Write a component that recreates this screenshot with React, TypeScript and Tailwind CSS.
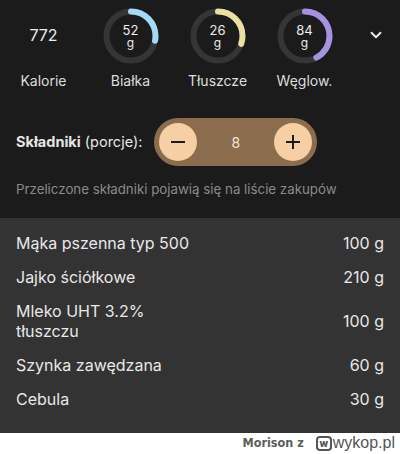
import React from 'react';
import { ChevronDown } from 'lucide-react';

interface RingProps {
  value: number;
  label: string;
  color: string;
  fraction: number;
}

const R = 24.5;
const C = 2 * Math.PI * R;

const Ring = ({ value, label, color, fraction }: RingProps) => (
  <div className="flex w-[87px] flex-col items-center">
    <div className="relative h-[56px] w-[56px]">
      <svg width="56" height="56" viewBox="0 0 56 56" className="-rotate-90">
        <circle cx="28" cy="28" r={R} fill="none" stroke="#353535" strokeWidth="6" />
        <circle
          cx="28"
          cy="28"
          r={R}
          fill="none"
          stroke={color}
          strokeWidth="6"
          strokeLinecap="round"
          strokeDasharray={`${C * fraction} ${C}`}
        />
      </svg>
      <div className="absolute inset-0 flex flex-col items-center justify-center pb-[2px] text-[#ececec]">
        <span className="text-[13px] leading-[14px]">{value}</span>
        <span className="text-[12px] leading-[11px]">g</span>
      </div>
    </div>
    <span className="mt-[7px] text-[14px] leading-[20px] text-[#dcdcdc]">{label}</span>
  </div>
);

const ingredients = [
  { name: 'Mąka pszenna typ 500', amount: '100 g' },
  { name: 'Jajko ściółkowe', amount: '210 g' },
  { name: 'Mleko UHT 3.2% tłuszczu', amount: '100 g' },
  { name: 'Szynka zawędzana', amount: '60 g' },
  { name: 'Cebula', amount: '30 g' },
];

export default function App() {
  return (
    <div className="flex h-[454px] w-[400px] flex-col bg-[#1c1b1c] font-['Inter',sans-serif]">
      {/* macros */}
      <div className="flex items-start pt-[8px]">
        <div className="flex w-[87px] flex-col items-center">
          <div className="flex h-[56px] items-center pb-[2px] text-[16px] text-[#ececec]">772</div>
          <span className="mt-[7px] text-[14px] leading-[20px] text-[#dcdcdc]">Kalorie</span>
        </div>
        <Ring value={52} label="Białka" color="#a3daf7" fraction={0.28} />
        <Ring value={26} label="Tłuszcze" color="#ece0a0" fraction={0.3} />
        <Ring value={84} label="Węglow." color="#a692e2" fraction={0.42} />
        <div className="flex h-[56px] flex-1 items-center justify-center pl-[4px] pb-[2px]">
          <ChevronDown size={18} strokeWidth={2.5} className="text-[#ececec]" />
        </div>
      </div>

      {/* servings stepper */}
      <div className="mt-[27px] flex items-center gap-[12px] pl-[16px]">
        <span className="text-[14.5px] text-[#e6e6e6]">
          <span className="font-bold">Składniki</span> (porcje):
        </span>
        <div className="flex items-center rounded-full bg-[#8b6d4e] p-[5px]">
          <button className="flex h-[38px] w-[38px] items-center justify-center rounded-full bg-[#f6cfa4]">
            <svg width="16" height="16" viewBox="0 0 16 16">
              <path d="M1 8h14" stroke="#1b1b1b" strokeWidth="2" />
            </svg>
          </button>
          <span className="w-[77px] text-center text-[14px] text-[#efe6dc]">8</span>
          <button className="flex h-[38px] w-[38px] items-center justify-center rounded-full bg-[#f6cfa4]">
            <svg width="16" height="16" viewBox="0 0 16 16">
              <path d="M1 8h14M8 1v14" stroke="#1b1b1b" strokeWidth="2" />
            </svg>
          </button>
        </div>
      </div>

      <p className="mt-[14px] pl-[16px] text-[13.3px] text-[#8a8a8a]">
        Przeliczone składniki pojawią się na liście zakupów
      </p>

      {/* ingredient list */}
      <div className="mt-[18px] flex flex-col bg-[#333333] px-[16px] pt-[8px] pb-[17px]">
        {ingredients.map((item) => (
          <div key={item.name} className="flex items-center justify-between py-[7px]">
            <span className="w-[195px] text-[16px] leading-[20px] text-[#e8e8e8]">{item.name}</span>
            <span className="text-[16px] leading-[20px] text-[#e8e8e8]">{item.amount}</span>
          </div>
        ))}
      </div>

      {/* watermark */}
      <div className="flex flex-1 items-center justify-end gap-[12px] bg-white pr-[5px]">
        <span className="font-['DejaVu_Sans_Condensed','DejaVu_Sans',sans-serif] text-[12.5px] font-bold text-[#5c5c5c]">
          Morison z
        </span>
        <div className="flex items-center">
          <div className="mr-[1px] flex h-[15px] w-[16px] items-center justify-center rounded-[4px] border-[2px] border-[#555]">
            <span className="text-[10px] font-extrabold leading-none text-[#555]">w</span>
          </div>
          <span className="font-['Liberation_Sans',sans-serif] text-[16px] leading-[20px] text-[#555]">wykop.pl</span>
        </div>
      </div>
    </div>
  );
}
